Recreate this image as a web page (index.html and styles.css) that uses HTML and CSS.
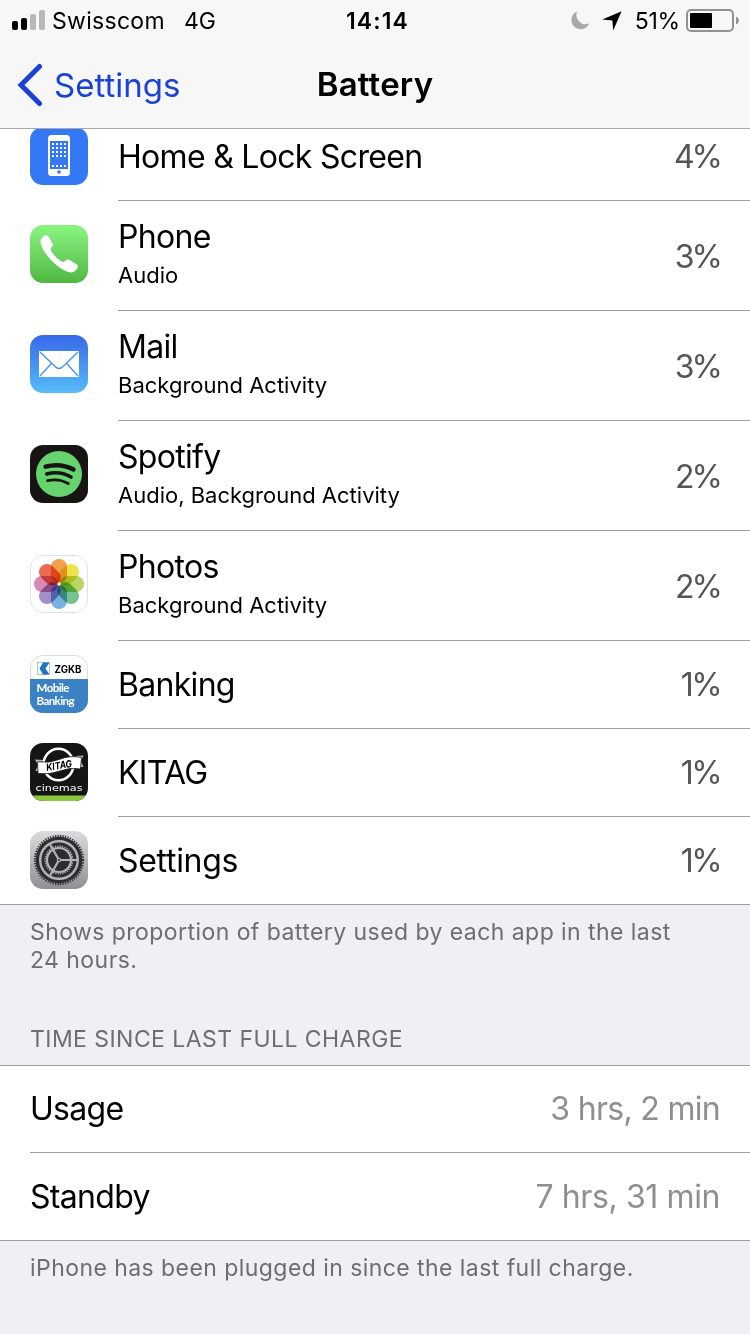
FILE: index.html
```html
<!DOCTYPE html>
<html lang="en">
<head>
<meta charset="UTF-8" />
<meta name="viewport" content="width=device-width, initial-scale=1" />
<title>Battery</title>
<link rel="stylesheet" href="styles.css">
</head>
<body>

<header class="top">
  <div class="status">
    <div class="status-left">
      <svg class="signal" width="34" height="20" viewBox="0 0 34 20">
        <rect x="0" y="11" width="6" height="9" rx="2" fill="#000"/>
        <rect x="9" y="8" width="6" height="12" rx="2" fill="#000"/>
        <rect x="18" y="4" width="6" height="16" rx="2" fill="#b8b8b8"/>
        <rect x="27" y="0" width="6" height="20" rx="2" fill="#b8b8b8"/>
      </svg>
      <span class="carrier">Swisscom</span>
      <span class="network">4G</span>
    </div>
    <div class="clock">14:14</div>
    <div class="status-right">
      <svg class="moon" width="19" height="19" viewBox="0 0 19 19">
        <path d="M6.2 0.4A9.2 9.2 0 1 0 18.2 12.2A9 9 0 0 1 6.2 0.4Z" fill="#a9a9a9"/>
      </svg>
      <svg class="location" width="20" height="20" viewBox="0 0 20 20">
        <path d="M19.6 0.3L11.2 19.4L10.4 9.4L0.3 8.5Z" fill="#000"/>
      </svg>
      <span class="percent">51%</span>
      <svg class="battery" width="54" height="24" viewBox="0 0 54 24">
        <rect x="1" y="1" width="46" height="21" rx="4" fill="none" stroke="#929292" stroke-width="2"/>
        <rect x="4" y="4" width="22" height="15" rx="1" fill="#000"/>
        <path d="M50 7.5Q53 9 53 11.5Q53 14 50 15.5Z" fill="#929292"/>
      </svg>
    </div>
  </div>
  <nav class="nav">
    <a class="back">
      <svg width="26" height="44" viewBox="0 0 26 44">
        <path d="M22.500 3.500L4 22L22.500 40.500" fill="none" stroke="#1a41d8" stroke-width="5" stroke-linecap="round" stroke-linejoin="miter"/>
      </svg>
      <span>Settings</span>
    </a>
    <h1>Battery</h1>
  </nav>
</header>

<main>
  <ul class="apps">
    <li class="app">
      <svg class="icon" viewBox="0 0 58 58">
        <rect width="58" height="58" rx="13" fill="#3478f6"/>
        <rect x="18" y="8" width="22" height="41" rx="3.500" fill="#fff"/>
        <rect x="20" y="14" width="18" height="28" fill="#3478f6"/>
        <path d="M22 17H37M22 21H37M22 25H37M22 29H37M22 39H37" stroke="#fff" stroke-width="2" stroke-dasharray="2 2"/>
        <circle cx="29" cy="45" r="1.800" fill="#3478f6"/>
      </svg>
      <div class="body">
        <div class="name">Home &amp; Lock Screen</div>
        <div class="value">4%</div>
      </div>
    </li>
    <li class="app tall">
      <svg class="icon" viewBox="0 0 58 58">
        <defs>
          <linearGradient id="phone" x2="0" y2="1"><stop stop-color="#8bf582"/><stop offset="1" stop-color="#50b841"/></linearGradient>
        </defs>
        <rect width="58" height="58" rx="13" fill="url(#phone)"/>
        <path d="M13.500 11.300C15.500 9.600 17.500 9.900 18.600 11.700L22.300 18C23.400 20 23 20.900 21.500 22.300C20.300 23.400 20.400 24.500 21.400 26.300C23.700 30.200 27.300 33.800 31.300 36.200C33 37.200 34 37.200 35.100 35.900C36.500 34.500 37.800 34 39.700 35.100L46.500 39.200C48.400 40.400 48.500 41.700 47.100 43.800C44.800 47.300 41.600 48.300 37.300 46.700C31.200 44.500 25.400 39.900 20.500 34.500C15.800 29.200 11.900 23.400 10.700 18.400C10 15.500 11.300 13.100 13.500 11.300Z" fill="#fff"/>
      </svg>
      <div class="body">
        <div class="name">Phone<small>Audio</small></div>
        <div class="value">3%</div>
      </div>
    </li>
    <li class="app tall">
      <svg class="icon" viewBox="0 0 58 58">
        <defs>
          <linearGradient id="mail" x2="0" y2="1"><stop stop-color="#3768e8"/><stop offset="1" stop-color="#58bcf8"/></linearGradient>
        </defs>
        <rect width="58" height="58" rx="13" fill="url(#mail)"/>
        <rect x="9" y="16" width="40" height="26" rx="1" fill="#fff"/>
        <path d="M10 17L25 31.500Q29 35.500 33 31.500L48 17M10 41L21.300 28.500M48 41L36.700 28.500" fill="none" stroke="#4b92f0" stroke-width="1.400"/>
      </svg>
      <div class="body">
        <div class="name">Mail<small>Background Activity</small></div>
        <div class="value">3%</div>
      </div>
    </li>
    <li class="app tall">
      <svg class="icon" viewBox="0 0 58 58">
        <rect width="58" height="58" rx="13" fill="#191414"/>
        <circle cx="29" cy="29" r="23" fill="#66d36e"/>
        <g fill="none" stroke="#191414" stroke-linecap="round">
          <path d="M15.500 21.700C24.500 19.300 35.500 20.300 43.500 24.500" stroke-width="4.400"/>
          <path d="M16.800 29C25 26.800 34 28 41 32" stroke-width="3.600"/>
          <path d="M17.600 35.700C25 34 32 35 38.200 38.500" stroke-width="2.900"/>
        </g>
      </svg>
      <div class="body">
        <div class="name">Spotify<small>Audio, Background Activity</small></div>
        <div class="value">2%</div>
      </div>
    </li>
    <li class="app tall">
      <svg class="icon" viewBox="0 0 58 58">
        <rect x=".5" y=".5" width="57" height="57" rx="12.500" fill="#fff" stroke="#e3e3e3"/>
        <g class="petals">
          <rect x="21" y="4" width="16" height="24" rx="8" fill="#f2a24a"/>
          <rect x="21" y="4" width="16" height="24" rx="8" fill="#efe34b" transform="rotate(45 29 29)"/>
          <rect x="21" y="4" width="16" height="24" rx="8" fill="#b7d765" transform="rotate(90 29 29)"/>
          <rect x="21" y="4" width="16" height="24" rx="8" fill="#77c291" transform="rotate(135 29 29)"/>
          <rect x="21" y="4" width="16" height="24" rx="8" fill="#78b0e2" transform="rotate(180 29 29)"/>
          <rect x="21" y="4" width="16" height="24" rx="8" fill="#a58ec6" transform="rotate(225 29 29)"/>
          <rect x="21" y="4" width="16" height="24" rx="8" fill="#d68bb4" transform="rotate(270 29 29)"/>
          <rect x="21" y="4" width="16" height="24" rx="8" fill="#ed6a52" transform="rotate(315 29 29)"/>
        </g>
        <circle cx="29" cy="29" r="1.500" fill="#fff"/>
      </svg>
      <div class="body">
        <div class="name">Photos<small>Background Activity</small></div>
        <div class="value">2%</div>
      </div>
    </li>
    <li class="app">
      <svg class="icon" viewBox="0 0 58 58">
        <defs>
          <clipPath id="round"><rect width="58" height="58" rx="13"/></clipPath>
        </defs>
        <rect x=".5" y=".5" width="57" height="57" rx="12.500" fill="#fff" stroke="#dedede"/>
        <rect y="24" width="58" height="34" fill="#3b82c4" clip-path="url(#round)"/>
        <rect x="7.500" y="7.500" width="12" height="12" fill="#fff" stroke="#8db6dc" stroke-width=".8"/>
        <path d="M13 7.500H19.500L15.500 13.500L19.500 19.500H13L9.500 13.500Z" fill="#2273bd"/>
        <text x="24.500" y="18" class="zgkb" textLength="27" lengthAdjust="spacingAndGlyphs">ZGKB</text>
        <text x="6.500" y="37" class="mobile" textLength="33">Mobile</text>
        <text x="6.500" y="49.500" class="mobile" textLength="38">Banking</text>
      </svg>
      <div class="body">
        <div class="name">Banking</div>
        <div class="value one">1%</div>
      </div>
    </li>
    <li class="app">
      <svg class="icon" viewBox="0 0 58 58">
        <rect width="58" height="58" rx="13" fill="#151515"/>
        <rect y="52.500" width="58" height="6" fill="#8dc63f" clip-path="url(#round)"/>
        <ellipse cx="28.500" cy="21.500" rx="15" ry="15.800" fill="none" stroke="#fff" stroke-width="2.500"/>
        <path d="M5 16.500L13 17V28L5.500 28L8 22Z" fill="#bbb"/>
        <path d="M53.500 24L46 24V13L53.500 12.500L51 18Z" fill="#bbb"/>
        <path d="M7.500 18.800Q19 20.500 29 16.500Q40 12 51.500 14.500L50.500 26Q40 24 30 28Q19 32 8 30.500Z" fill="#fff" stroke="#151515" stroke-width=".8"/>
        <text x="16" y="26" class="kitag" textLength="26" lengthAdjust="spacingAndGlyphs" transform="rotate(-9 29 22)">KITAG</text>
        <text x="5.500" y="47.500" class="cinemas" textLength="47" lengthAdjust="spacingAndGlyphs">cinemas</text>
      </svg>
      <div class="body">
        <div class="name">KITAG</div>
        <div class="value one">1%</div>
      </div>
    </li>
    <li class="app">
      <svg class="icon" viewBox="0 0 58 58">
        <defs>
          <linearGradient id="gear" x2="0" y2="1"><stop stop-color="#dcdcdf"/><stop offset="1" stop-color="#8f8f94"/></linearGradient>
        </defs>
        <rect width="58" height="58" rx="13" fill="url(#gear)"/>
        <g fill="none" stroke="#b4b4b8">
          <circle cx="29" cy="29" r="24.200" stroke="#2e2e30" stroke-width="2" stroke-dasharray="1.270 1.270"/>
          <circle cx="29" cy="29" r="23.400" fill="#2e2e30" stroke="none"/>
          <circle cx="29" cy="29" r="18.800" stroke-width="2.400"/>
          <circle cx="29" cy="29" r="13.700" stroke-width="1.600" stroke-dasharray="1.200 1.200"/>
          <circle cx="29" cy="29" r="12" stroke-width="2.200"/>
          <path d="M29 29H48M29 29L19.500 12.500M29 29L19.500 45.500" stroke-width="2.200"/>
          <circle cx="29" cy="29" r="2.200" fill="#b4b4b8" stroke="none"/>
          <circle cx="29" cy="29" r="1" fill="#2e2e30" stroke="none"/>
        </g>
      </svg>
      <div class="body">
        <div class="name">Settings</div>
        <div class="value one">1%</div>
      </div>
    </li>
  </ul>
  <p class="note">Shows proportion of battery used by each app in the last<br>24 hours.</p>

  <h2>TIME SINCE LAST FULL CHARGE</h2>
  <dl class="charge">
    <div class="line"><dt>Usage</dt><dd>3 hrs, 2 min</dd></div>
    <div class="line"><dt>Standby</dt><dd>7 hrs, 31 min</dd></div>
  </dl>
  <p class="note">iPhone has been plugged in since the last full charge.</p>
</main>

</body>
</html>
```

FILE: styles.css
```css
* {
  box-sizing: border-box;
}
body {
  margin: 0;
  height: 1334px;
  overflow: hidden;
  background: #efeff4;
  color: #000;
  font-family: Inter, "Liberation Sans", sans-serif;
  font-size: 32px;
}
h1, h2, p, ul, dl, dd {
  margin: 0;
  padding: 0;
}
svg {
  display: block;
  flex: none;
}
.top {
  position: relative;
  z-index: 1;
  height: 129px;
  background: #f7f7f7;
  border-bottom: 1px solid #a9a9ab;
}
.status {
  display: grid;
  grid-template-columns: 1fr auto 1fr;
  height: 40px;
  font-size: 23px;
  line-height: 42px;
}
.status-left, .status-right {
  display: flex;
}
.status-right {
  justify-content: flex-end;
}
.signal {
  margin: 10px 6px 0 12px;
}
.carrier {
  letter-spacing: 0.3px;
}
.network {
  margin-left: 19px;
}
.clock {
  padding-left: 5px;
  font-weight: 600;
  letter-spacing: 1.1px;
}
.moon {
  margin: 11px 12px 0 0;
}
.location {
  margin: 11px 13px 0 0;
}
.percent {
  letter-spacing: -0.2px;
}
.battery {
  margin: 9px 10px 0 6px;
}
.nav {
  display: grid;
  grid-template-columns: 1fr auto 1fr;
  height: 88px;
  line-height: 88px;
}
.back {
  display: flex;
  align-items: center;
  gap: 11px;
  padding-left: 17px;
  color: #1a41d8;
  font-size: 33px;
}
h1 {
  font-size: 33px;
  font-weight: 600;
  letter-spacing: 0.2px;
  line-height: 89px;
}
.apps {
  margin-top: -16px;
  list-style: none;
  background: #fff;
  border-bottom: 1px solid #a0a0a3;
}
.app {
  display: flex;
  height: 88px;
  padding-left: 30px;
}
.app:last-child {
  height: 87px;
}
.icon {
  width: 58px;
  height: 58px;
  margin: 14px 30px 0 0;
}
.body {
  flex: 1;
  display: flex;
  align-items: center;
  justify-content: space-between;
  padding-right: 30px;
  border-bottom: 1px solid #a0a0a3;
}
.app:last-child .body {
  border-bottom: 0;
}
.app:last-child .name {
  letter-spacing: -0.3px;
}
.tall {
  height: 110px;
}
.tall .icon {
  margin-top: 24px;
}
.name {
  line-height: 40px;
  letter-spacing: -0.7px;
}
small {
  display: block;
  font-size: 22px;
  line-height: 36px;
  letter-spacing: 0;
  padding-bottom: 2px;
}
.value {
  color: #555;
  letter-spacing: -3px;
}
.value.one {
  letter-spacing: -2.6px;
}
.tall .value {
  padding-top: 2px;
}
.note {
  padding: 13px 30px 0;
  color: #6d6d72;
  font-size: 23px;
  line-height: 28px;
  letter-spacing: 0.44px;
}
h2 {
  margin-top: 50px;
  padding: 0 30px 11px;
  color: #6d6d72;
  font-size: 23px;
  font-weight: 400;
  line-height: 30px;
  letter-spacing: 0.44px;
}
.charge {
  padding-left: 30px;
  background: #fff;
  border-top: 1px solid #a0a0a3;
  border-bottom: 1px solid #a0a0a3;
}
.line {
  display: flex;
  justify-content: space-between;
  height: 86px;
  padding-right: 30px;
  line-height: 86px;
  letter-spacing: -0.7px;
}
.line + .line {
  height: 88px;
  line-height: 88px;
  border-top: 1px solid #a0a0a3;
}
.line + .line dd {
  letter-spacing: -0.4px;
}
dd {
  color: #8e8e93;
}
.petals {
  isolation: isolate;
}
.petals rect {
  mix-blend-mode: multiply;
}
.zgkb {
  font: 700 10px Inter, sans-serif;
}
.mobile {
  font: 700 11.5px Lato, sans-serif;
  fill: #fff;
}
.kitag {
  font: italic 700 10px Inter, sans-serif;
}
.cinemas {
  font: 500 9px "DejaVu Sans", sans-serif;
  fill: #fff;
}
```
